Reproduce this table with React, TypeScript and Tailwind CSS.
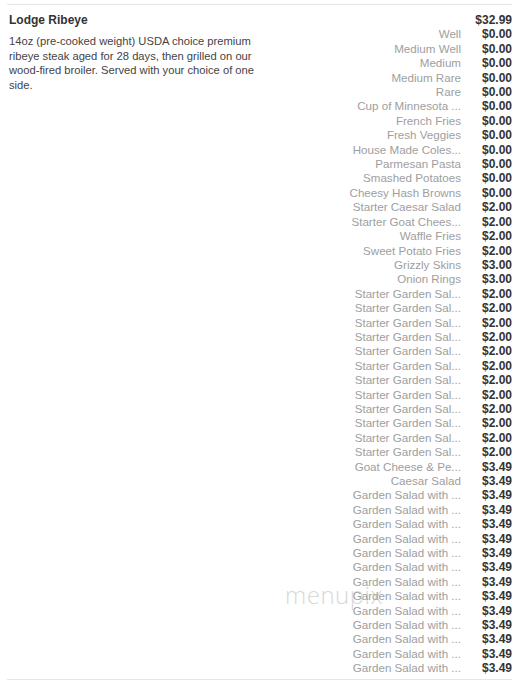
import React from "react";

const rows: [string, string][] = [
  ["Well", "$0.00"],
  ["Medium Well", "$0.00"],
  ["Medium", "$0.00"],
  ["Medium Rare", "$0.00"],
  ["Rare", "$0.00"],
  ["Cup of Minnesota ...", "$0.00"],
  ["French Fries", "$0.00"],
  ["Fresh Veggies", "$0.00"],
  ["House Made Coles...", "$0.00"],
  ["Parmesan Pasta", "$0.00"],
  ["Smashed Potatoes", "$0.00"],
  ["Cheesy Hash Browns", "$0.00"],
  ["Starter Caesar Salad", "$2.00"],
  ["Starter Goat Chees...", "$2.00"],
  ["Waffle Fries", "$2.00"],
  ["Sweet Potato Fries", "$2.00"],
  ["Grizzly Skins", "$3.00"],
  ["Onion Rings", "$3.00"],
  ...Array.from({ length: 12 }, () => ["Starter Garden Sal...", "$2.00"] as [string, string]),
  ["Goat Cheese & Pe...", "$3.49"],
  ["Caesar Salad", "$3.49"],
  ...Array.from({ length: 13 }, () => ["Garden Salad with ...", "$3.49"] as [string, string]),
];

export default function App() {
  return (
    <div className="relative bg-white w-[519px] h-[684px] pt-[4px] px-[7px]" style={{ fontFamily: '"Liberation Sans", Arial, sans-serif' }}>
      <div className="absolute left-[285px] top-[583px] text-[24px] leading-[24px] text-[#d8d8d8] tracking-[0.5px] pointer-events-none" style={{ fontFamily: '"Open Sans", sans-serif', fontWeight: 300 }}>
        menupix
      </div>
      <div className="relative flex border-t border-b border-[#e6e6e6] pt-[8px] pb-[3px] text-[12px] leading-[14.4px]">
        <div className="w-[254px] pl-[2px] text-[#333]">
          <div className="font-bold">Lodge Ribeye</div>
          <div className="mt-[7px] text-[11.2px] leading-[14.5px] text-[#444]">
            14oz (pre-cooked weight) USDA choice premium ribeye steak aged for 28 days, then grilled on our wood-fired broiler. Served with your choice of one side.
          </div>
        </div>
        <div className="flex-1 flex flex-col">
          <div className="flex justify-end">
            <div className="w-[51px] text-right font-bold text-[#333]">$32.99</div>
          </div>
          {rows.map(([label, price], i) => (
            <div key={i} className="flex justify-end">
              <div className="w-[112px] text-right text-[11.6px] text-[#9e9e9e] whitespace-nowrap overflow-hidden">{label}</div>
              <div className="w-[51px] text-right font-bold text-[#333]">{price}</div>
            </div>
          ))}
        </div>
      </div>
    </div>
  );
}
